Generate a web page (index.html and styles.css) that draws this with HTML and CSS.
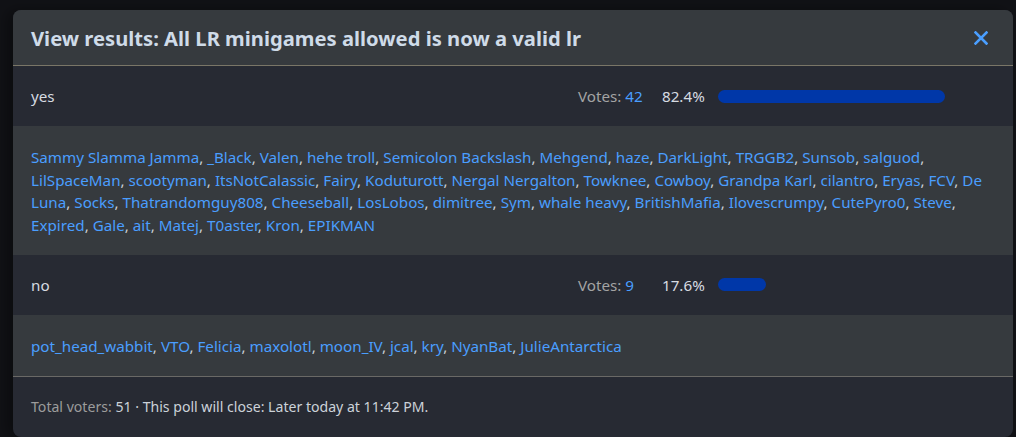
FILE: index.html
```html
<!DOCTYPE html>
<html>
<head>
<meta charset="utf-8">
<link rel="stylesheet" href="styles.css">
</head>
<body>
<div class="modal">
  <div class="modal-header">
    <h2 class="title">View results: All LR minigames allowed is now a valid lr</h2>
    <svg class="close" width="14" height="14" viewBox="0 0 14 14"><path d="M1.5 1.5 L12.5 12.5 M12.5 1.5 L1.5 12.5" stroke="#4a9eff" stroke-width="2.6" stroke-linecap="square"/></svg>
  </div>
  <div class="option">
    <div class="label">yes</div>
    <div class="votes">Votes: <span class="num">42</span></div>
    <div class="pct">82.4%</div>
    <div class="track"><div class="bar" style="width:82.4%"></div></div>
  </div>
  <div class="voters"><a>Sammy Slamma Jamma</a>, <a>_Black</a>, <a>Valen</a>, <a>hehe troll</a>, <a>Semicolon Backslash</a>, <a>Mehgend</a>, <a>haze</a>, <a>DarkLight</a>, <a>TRGGB2</a>, <a>Sunsob</a>, <a>salguod</a>, <a>LilSpaceMan</a>, <a>scootyman</a>, <a>ItsNotCalassic</a>, <a>Fairy</a>, <a>Koduturott</a>, <a>Nergal Nergalton</a>, <a>Towknee</a>, <a>Cowboy</a>, <a>Grandpa Karl</a>, <a>cilantro</a>, <a>Eryas</a>, <a>FCV</a>, <a>De Luna</a>, <a>Socks</a>, <a>Thatrandomguy808</a>, <a>Cheeseball</a>, <a>LosLobos</a>, <a>dimitree</a>, <a>Sym</a>, <a>whale heavy</a>, <a>BritishMafia</a>, <a>Ilovescrumpy</a>, <a>CutePyro0</a>, <a>Steve</a>, <a>Expired</a>, <a>Gale</a>, <a>ait</a>, <a>Matej</a>, <a>T0aster</a>, <a>Kron</a>, <a>EPIKMAN</a></div>
  <div class="option">
    <div class="label">no</div>
    <div class="votes">Votes: <span class="num">9</span></div>
    <div class="pct">17.6%</div>
    <div class="track"><div class="bar" style="width:17.6%"></div></div>
  </div>
  <div class="voters"><a>pot_head_wabbit</a>, <a>VTO</a>, <a>Felicia</a>, <a>maxolotl</a>, <a>moon_IV</a>, <a>jcal</a>, <a>kry</a>, <a>NyanBat</a>, <a>JulieAntarctica</a></div>
  <div class="footer"><span class="muted">Total voters:</span> 51 · This poll will close: Later today at 11:42 PM.</div>
</div>
</body>
</html>
```

FILE: styles.css
```css
html, body {
  margin: 0;
  background: #111216;
  font-family: "Noto Sans", "Open Sans", sans-serif;
}
body {
  padding: 10px 3px 0 13px;
  height: 437px;
  box-sizing: border-box;
  overflow: hidden;
}
.modal {
  width: 1000px;
  background: #272a33;
  border-radius: 8px;
  overflow: hidden;
  box-shadow: -6px 0 14px rgba(0,0,0,0.35);
}
.modal-header {
  height: 55px;
  background: #363a3e;
  border-bottom: 1px solid #7a7667;
  display: flex;
  align-items: center;
  padding: 0 25px 0 18px;
}
.title {
  flex: 1;
  margin: 0;
  font-size: 20.2px;
  font-weight: 700;
  color: #cfdbe8;
}
.close { display: block; }
.option {
  height: 60px;
  display: flex;
  align-items: center;
  padding: 0 20px 0 18px;
  background: #272a33;
  font-size: 15.2px;
  color: #d6dbe1;
}
.label { flex: 1; }
.votes { width: 84px; color: #a3a3a3; white-space: nowrap; }
.num { color: #4a9eff; }
.pct { width: 56px; color: #d6dbe1; }
.track { width: 275px; height: 13px; }
.bar { height: 13px; border-radius: 7px; background: #0037a8; }
.voters {
  background: #363a3e;
  padding: 20px 18px 18px;
  font-size: 15.2px;
  line-height: 22.7px;
  color: #c9cfd6;
}
.voters a { color: #4a9eff; }
.footer {
  border-top: 1px solid #6a6966;
  height: 60px;
  display: flex;
  align-items: center;
  padding: 0 18px;
  font-size: 14.1px;
  color: #ccd2d9;
  white-space: pre;
}
.muted { color: #9c9c9c; }
```
